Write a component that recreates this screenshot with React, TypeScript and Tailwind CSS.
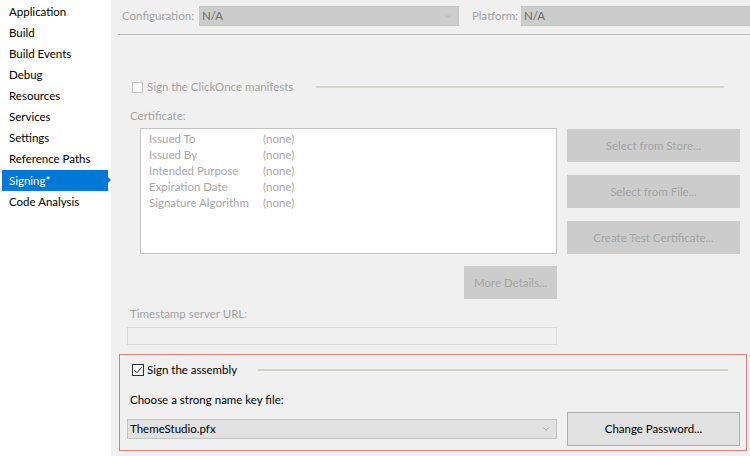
import { ChevronDown } from "lucide-react";

const navItems = [
  "Application",
  "Build",
  "Build Events",
  "Debug",
  "Resources",
  "Services",
  "Settings",
  "Reference Paths",
  "Signing*",
  "Code Analysis",
];

const certRows = [
  "Issued To",
  "Issued By",
  "Intended Purpose",
  "Expiration Date",
  "Signature Algorithm",
];

function Sidebar() {
  return (
    <div className="w-[111px] shrink-0 bg-white pt-[1px]">
      {navItems.map((item) => {
        const active = item === "Signing*";
        return (
          <div key={item} className="relative h-[21.1px] pl-[2px] pr-[3px]">
            <div
              className={
                active
                  ? "flex h-full items-center bg-[#0078d7] pl-[7px] text-white"
                  : "flex h-full items-center pl-[7px] text-black"
              }
            >
              {item}
            </div>
            {active && (
              <div className="absolute right-0 top-[6px] h-0 w-0 border-y-[4px] border-l-[4px] border-y-transparent border-l-[#0078d7]" />
            )}
          </div>
        );
      })}
    </div>
  );
}

function DisabledButton({ label, w }: { label: string; w: string }) {
  return (
    <div
      className={`flex h-[33px] ${w} items-center justify-center border border-[#cccccc] bg-[#cccccc] text-[#a3a3a3]`}
    >
      {label}
    </div>
  );
}

export default function App() {
  return (
    <div
      className="flex h-[456px] w-[750px] overflow-hidden whitespace-nowrap bg-[#f0f0f0] text-[11.5px] leading-none"
      style={{ fontFamily: 'Lato, "Open Sans", sans-serif' }}
    >
      <Sidebar />

      <div className="flex-1">
        {/* configuration bar */}
        <div className="flex h-[34px] items-start pl-[11px] pt-[6px]">
          <div className="flex h-[20px] w-[77px] items-center text-[#a3a3a3]">Configuration:</div>
          <div className="flex h-[20px] w-[260px] items-center justify-between border border-[#c6c6c6] bg-[#cccccc] pl-[2px] pr-[5px] text-[#6a6a6a]">
            <span>N/A</span>
            <ChevronDown size={10} strokeWidth={1.2} className="text-[#a8a8a8]" />
          </div>
          <div className="ml-[13px] flex h-[20px] w-[49px] items-center text-[#a3a3a3]">Platform:</div>
          <div className="flex h-[20px] flex-1 items-center border border-r-0 border-[#c6c6c6] bg-[#cccccc] pl-[2px] text-[#6a6a6a]">
            N/A
          </div>
        </div>
        <div className="ml-[7px] h-px bg-[#bcbcbc]" />

        {/* ClickOnce */}
        <div className="mt-[42px] flex h-[20px] items-center pl-[21px]">
          <div className="h-[11px] w-[11px] border border-[#c4c4c4] bg-white" />
          <span className="ml-[4px] w-[169px] text-[#a3a3a3]">Sign the ClickOnce manifests</span>
          <div className="h-[2px] w-[408px] bg-[#d6d6cc]" />
        </div>

        <div className="mt-[11px] flex h-[16px] items-center pl-[19px] text-[#a3a3a3]">Certificate:</div>

        <div className="mt-[4px] flex pl-[29px]">
          <div className="h-[126px] w-[417px] border border-[#c3c3c3] bg-white pl-[8px] pt-[2px] text-[#a8a8a8]">
            {certRows.map((r) => (
              <div key={r} className="flex h-[16px] items-center">
                <span className="w-[114px]">{r}</span>
                <span>(none)</span>
              </div>
            ))}
          </div>
          <div className="ml-[10px] flex flex-col gap-[13px] pt-px">
            <DisabledButton label="Select from Store..." w="w-[173px]" />
            <DisabledButton label="Select from File..." w="w-[173px]" />
            <DisabledButton label="Create Test Certificate..." w="w-[173px]" />
          </div>
        </div>

        <div className="mt-[12px] flex w-[446px] justify-end">
          <DisabledButton label="More Details..." w="w-[93px]" />
        </div>

        <div className="mt-[7px] flex h-[16px] items-center pl-[19px] text-[#a3a3a3]">Timestamp server URL:</div>
        <div className="ml-[16px] mt-[5px] h-[18px] w-[430px] border border-[#d9d9d9] bg-[#f0f0f0]" />

        {/* sign assembly */}
        <div className="ml-[8px] mt-[9px] h-[97px] w-[628px] border border-[#e47b7b] pt-[5px]">
          <div className="flex h-[20px] items-center pl-[12px]">
            <div className="relative h-[12px] w-[12px] border border-[#333333] bg-white">
              <svg viewBox="0 0 12 12" className="absolute left-[-1px] top-[-1px] h-[12px] w-[12px]">
                <path d="M2.5 6.2 L5 8.7 L9.8 3.2" fill="none" stroke="#333333" strokeWidth="1" />
              </svg>
            </div>
            <span className="ml-[3px] w-[111px] text-black">Sign the assembly</span>
            <div className="h-[2px] w-[470px] bg-[#cfcfc3]" />
          </div>

          <div className="mt-[12px] flex h-[16px] items-center pl-[10px] text-black">
            Choose a strong name key file:
          </div>

          <div className="mt-[4px] flex items-start pl-[7px]">
            <div className="mt-[7px] flex h-[20px] w-[430px] items-center justify-between border border-[#c3c3c3] bg-[#e1e1e1] pl-[2px] pr-[5px] text-black">
              <span>ThemeStudio.pfx</span>
              <ChevronDown size={10} strokeWidth={1.2} className="text-[#707070]" />
            </div>
            <div className="ml-[10px] flex h-[34px] w-[173px] items-center justify-center border border-[#adadad] bg-[#e1e1e1] text-black">
              Change Password...
            </div>
          </div>
        </div>
      </div>
    </div>
  );
}
